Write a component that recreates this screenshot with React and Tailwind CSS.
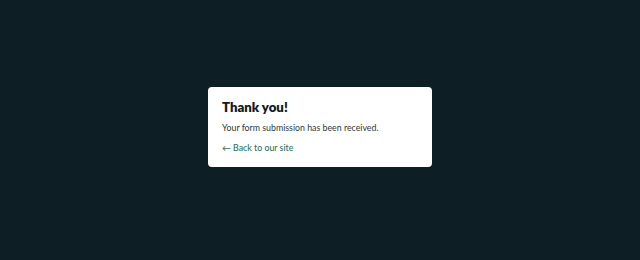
export default function App() {
  return (
    <div className="w-[640px] h-[260px] bg-[#0e1e25] flex items-center justify-center pb-[6px] font-['Lato','Noto_Sans',sans-serif]">
      <div className="w-[224px] h-[80px] bg-white rounded-[4px] px-[14px] pt-[11px]">
        <h1 className="text-[13.2px] font-extrabold text-[#111a1f] leading-[18px]">Thank you!</h1>
        <p className="mt-[5px] text-[8.8px] text-[#2f373c] leading-[14px]">Your form submission has been received.</p>
        <a href="#" className="block mt-[6px] text-[8.8px] font-medium text-[#2a7463] leading-[14px]">← Back to our site</a>
      </div>
    </div>
  )
}
